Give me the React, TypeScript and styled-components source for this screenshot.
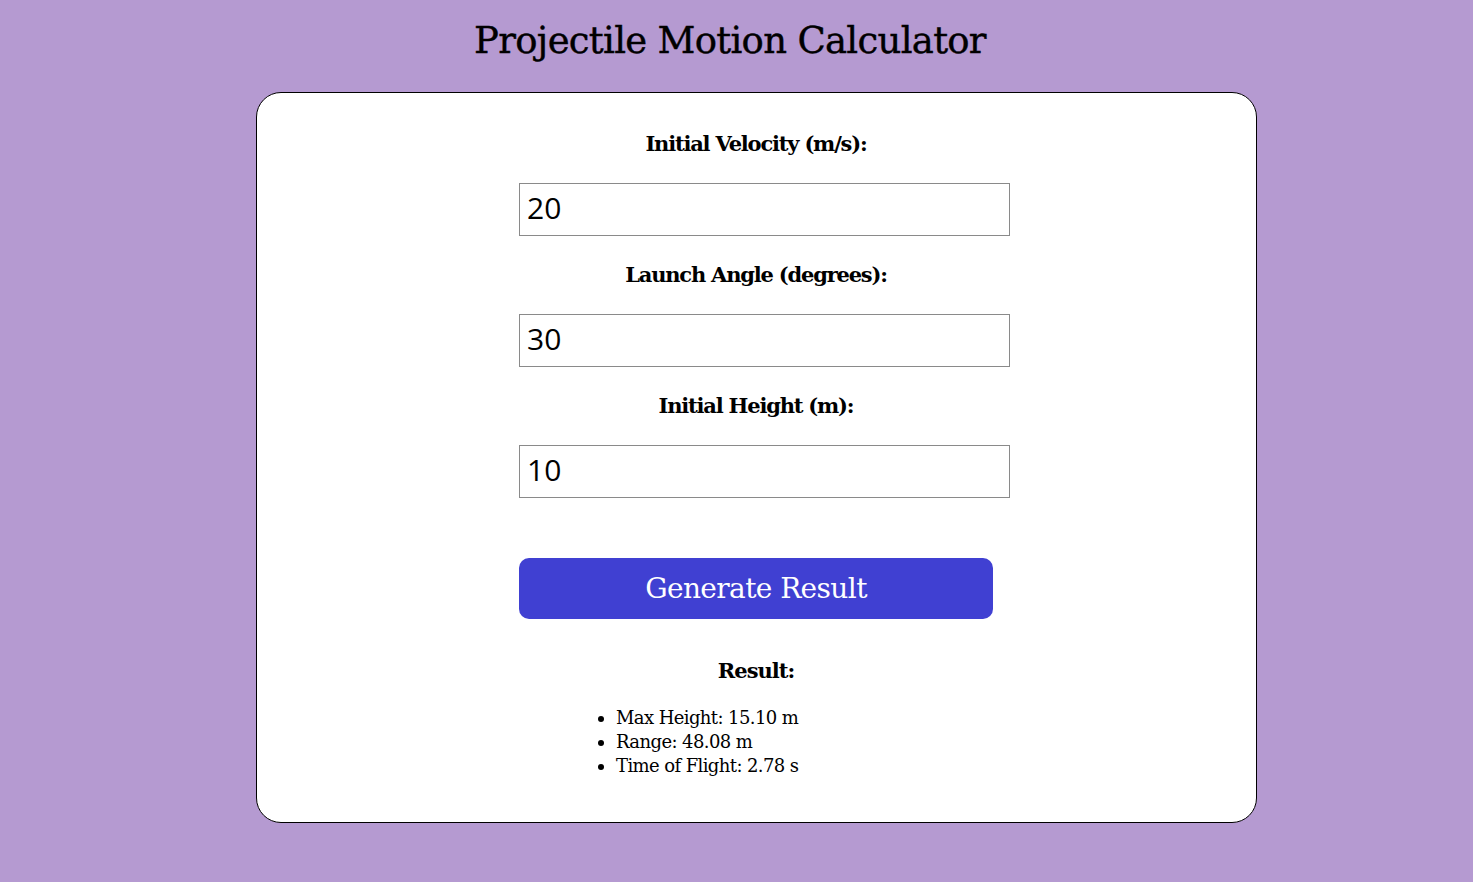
import styled, { createGlobalStyle } from "styled-components";

const GlobalStyle = createGlobalStyle`
  html, body {
    margin: 0;
    padding: 0;
    background: #b59ad1;
  }
  body {
    font-family: "DejaVu Serif", "Liberation Serif", serif;
  }
`;

const Page = styled.div`
  min-height: 882px;
  padding-top: 14px;
  box-sizing: border-box;
`;

const Title = styled.h1`
  margin: 0 0 26px;
  padding-right: 13px;
  text-align: center;
  font-size: 37px;
  font-weight: 400;
  line-height: 53px;
  color: #000;
  letter-spacing: -0.7px;
  -webkit-text-stroke: 0.4px #000;
`;

const Card = styled.div`
  width: 1001px;
  height: 731px;
  box-sizing: border-box;
  margin: -1px 0 0 256px;
  background: #fff;
  border: 1px solid #000;
  border-radius: 25px;
  padding: 28px 1px 0 0;
  display: flex;
  flex-direction: column;
  align-items: center;
`;

const Form = styled.div`
  width: 474px;
  display: flex;
  flex-direction: column;
`;

const Field = styled.div`
  display: flex;
  flex-direction: column;
  align-items: stretch;
  margin-bottom: 16px;
`;

const Label = styled.label`
  text-align: center;
  font-size: 21px;
  font-weight: 700;
  line-height: 46px;
  margin-bottom: 16px;
  letter-spacing: -1.2px;
`;

const Input = styled.input`
  width: 491px;
  height: 53px;
  box-sizing: border-box;
  border: 1px solid #8a8a8a;
  padding: 0 7px 4px;
  font-family: "Open Sans", "Noto Sans", sans-serif;
  font-size: 30px;
  color: #000;
  outline: none;
`;

const Button = styled.button`
  margin-top: 44px;
  height: 61px;
  border: none;
  border-radius: 10px;
  background: #4040d2;
  color: #fff;
  font-family: "DejaVu Serif", "Liberation Serif", serif;
  font-size: 28px;
  letter-spacing: -0.6px;
  cursor: pointer;
`;

const ResultTitle = styled.h3`
  margin: 39px 0 23px;
  text-align: center;
  font-size: 21px;
  font-weight: 700;
  letter-spacing: -1px;
`;

const List = styled.ul`
  margin: 0;
  padding-left: 97px;
  font-size: 18px;
  line-height: 24px;
  letter-spacing: -0.6px;
`;

const fields = [
  { label: "Initial Velocity (m/s):", value: "20" },
  { label: "Launch Angle (degrees):", value: "30" },
  { label: "Initial Height (m):", value: "10" },
];

const results = ["Max Height: 15.10 m", "Range: 48.08 m", "Time of Flight: 2.78 s"];

export default function App() {
  return (
    <Page>
      <GlobalStyle />
      <Title>Projectile Motion Calculator</Title>
      <Card>
        <Form>
          {fields.map((f) => (
            <Field key={f.label}>
              <Label>{f.label}</Label>
              <Input type="text" defaultValue={f.value} />
            </Field>
          ))}
          <Button>Generate Result</Button>
          <ResultTitle>Result:</ResultTitle>
          <List>
            {results.map((r) => (
              <li key={r}>{r}</li>
            ))}
          </List>
        </Form>
      </Card>
    </Page>
  );
}
